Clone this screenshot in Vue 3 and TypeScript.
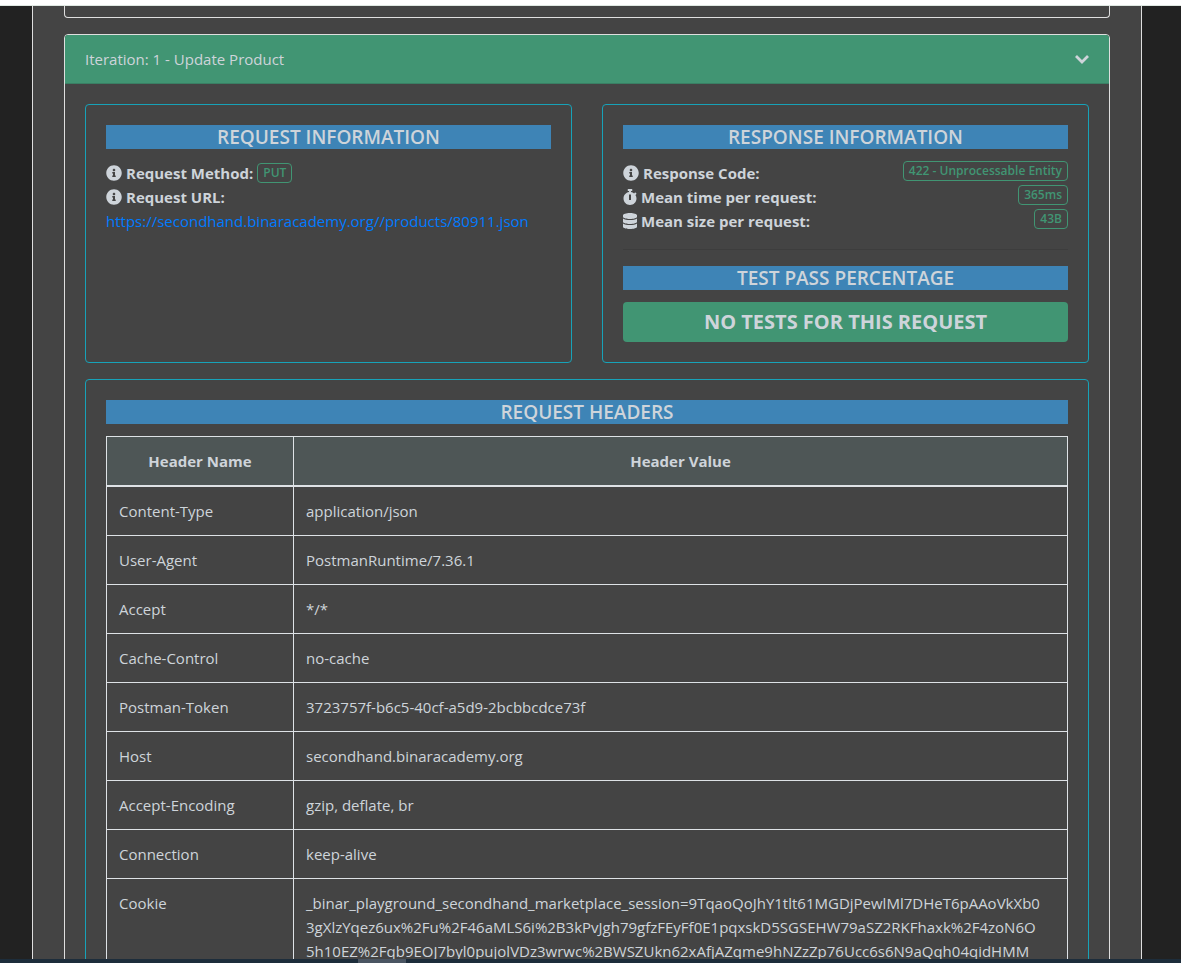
<script setup lang="ts">
interface HeaderRow {
  name: string
  lines: string[]
}

interface Metric {
  icon: 'info' | 'stopwatch' | 'database'
  label: string
  value: string
}

const icons = {
  info: {
    box: '0 0 512 512',
    path: 'M256 8C119.043 8 8 119.083 8 256c0 136.997 111.043 248 248 248s248-111.003 248-248C504 119.083 392.957 8 256 8zm0 110c23.196 0 42 18.804 42 42s-18.804 42-42 42-42-18.804-42-42 18.804-42 42-42zm56 254c0 6.627-5.373 12-12 12h-88c-6.627 0-12-5.373-12-12v-24c0-6.627 5.373-12 12-12h12v-64h-12c-6.627 0-12-5.373-12-12v-24c0-6.627 5.373-12 12-12h64c6.627 0 12 5.373 12 12v100h12c6.627 0 12 5.373 12 12v24z',
  },
  stopwatch: {
    box: '0 0 448 512',
    path: 'M432 304c0 114.9-93.1 208-208 208S16 418.9 16 304c0-104 76.3-190.2 176-205.5V64h-28c-6.6 0-12-5.4-12-12V12c0-6.6 5.4-12 12-12h120c6.6 0 12 5.4 12 12v40c0 6.6-5.4 12-12 12h-28v34.5c37.5 5.8 71.7 21.6 99.7 44.6l27.5-27.5c4.7-4.7 12.3-4.7 17 0l28.3 28.3c4.7 4.7 4.7 12.3 0 17l-29.4 29.4-.6.6C419.7 223.3 432 262.2 432 304zm-176 36V188.5c0-6.6-5.4-12-12-12h-40c-6.6 0-12 5.4-12 12V340c0 6.6 5.4 12 12 12h40c6.6 0 12-5.4 12-12z',
  },
  database: {
    box: '0 0 448 512',
    path: 'M448 73.143v45.714C448 159.143 347.667 192 224 192S0 159.143 0 118.857V73.143C0 32.857 100.333 0 224 0s224 32.857 224 73.143zM448 176v102.857C448 319.143 347.667 352 224 352S0 319.143 0 278.857V176c48.125 33.143 136.208 48.572 224 48.572S399.874 209.143 448 176zm0 160v102.857C448 479.143 347.667 512 224 512S0 479.143 0 438.857V336c48.125 33.143 136.208 48.572 224 48.572S399.874 369.143 448 336z',
  },
}

const metrics: Metric[] = [
  { icon: 'info', label: 'Response Code:', value: '422 - Unprocessable Entity' },
  { icon: 'stopwatch', label: 'Mean time per request:', value: '365ms' },
  { icon: 'database', label: 'Mean size per request:', value: '43B' },
]

const url = 'https://secondhand.binaracademy.org//products/80911.json'

const headers: HeaderRow[] = [
  { name: 'Content-Type', lines: ['application/json'] },
  { name: 'User-Agent', lines: ['PostmanRuntime/7.36.1'] },
  { name: 'Accept', lines: ['*/*'] },
  { name: 'Cache-Control', lines: ['no-cache'] },
  { name: 'Postman-Token', lines: ['3723757f-b6c5-40cf-a5d9-2bcbbcdce73f'] },
  { name: 'Host', lines: ['secondhand.binaracademy.org'] },
  { name: 'Accept-Encoding', lines: ['gzip, deflate, br'] },
  { name: 'Connection', lines: ['keep-alive'] },
  {
    name: 'Cookie',
    lines: [
      '_binar_playground_secondhand_marketplace_session=9TqaoQoJhY1tlt61MGDjPewlMl7DHeT6pAAoVkXb0',
      '3gXlzYqez6ux%2Fu%2F46aMLS6i%2B3kPvJgh79gfzFEyFf0E1pqxskD5SGSEHW79aSZ2RKFhaxk%2F4zoN6O',
      '5h10EZ%2Fqb9EOJ7byl0pujolVDz3wrwc%2BWSZUkn62xAfjAZqme9hNZzZp76Ucc6s6N9aQqh04qidHMM',
    ],
  },
]
</script>

<template>
  <div class="window">
    <div class="chrome"></div>
    <main class="page">
      <div class="container">
        <div class="previous"></div>
        <section class="iteration">
          <button class="toggle" type="button" aria-expanded="true">
            <span>Iteration: 1 - Update Product</span>
            <svg class="chevron" viewBox="0 0 14 10" aria-hidden="true">
              <path d="M1 2 7 8 13 2" fill="none" stroke="currentColor" stroke-width="2.8" />
            </svg>
          </button>
          <div class="content">
            <div class="cards">
              <section class="card">
                <h5>REQUEST INFORMATION</h5>
                <div class="line">
                  <svg class="icon" :viewBox="icons.info.box" aria-hidden="true"><path :d="icons.info.path" /></svg>
                  <strong>Request Method:</strong>
                  <span class="badge">PUT</span>
                </div>
                <div class="line">
                  <svg class="icon" :viewBox="icons.info.box" aria-hidden="true"><path :d="icons.info.path" /></svg>
                  <strong>Request URL:</strong>
                </div>
                <a class="url" :href="url">{{ url }}</a>
              </section>
              <section class="card">
                <h5>RESPONSE INFORMATION</h5>
                <div v-for="m in metrics" :key="m.label" class="line">
                  <svg class="icon" :class="{ narrow: m.icon !== 'info' }" :viewBox="icons[m.icon].box" aria-hidden="true">
                    <path :d="icons[m.icon].path" />
                  </svg>
                  <strong>{{ m.label }}</strong>
                  <span class="badge value">{{ m.value }}</span>
                </div>
                <hr />
                <h5>TEST PASS PERCENTAGE</h5>
                <div class="result">NO TESTS FOR THIS REQUEST</div>
              </section>
            </div>
            <section class="card">
              <h5>REQUEST HEADERS</h5>
              <table>
                <thead>
                  <tr>
                    <th class="name" scope="col">Header Name</th>
                    <th scope="col">Header Value</th>
                  </tr>
                </thead>
                <tbody>
                  <tr v-for="row in headers" :key="row.name">
                    <td>{{ row.name }}</td>
                    <td><span v-for="line in row.lines" :key="line" class="text-line">{{ line }}</span></td>
                  </tr>
                </tbody>
              </table>
            </section>
          </div>
        </section>
      </div>
    </main>
    <footer class="taskbar"><span class="task"></span></footer>
  </div>
</template>

<style>
body {
  margin: 0;
  background: #222;
}
</style>

<style scoped>
* {
  box-sizing: border-box;
}
.window {
  height: 100vh;
  display: flex;
  flex-direction: column;
  overflow: hidden;
  font: 15px/24px "Segoe UI", "Open Sans", "Noto Sans", sans-serif;
  color: #ced4da;
}
.chrome {
  flex: none;
  height: 6px;
  background: #fff;
  border-bottom: 1px solid #dfe8e2;
}
.page {
  flex: 1;
  min-height: 0;
  overflow: hidden;
  background: #222;
  padding: 0 39px 0 32px;
}
.container {
  background: #444;
  border: solid #dfdfdf;
  border-width: 0 1px;
  padding: 0 31px;
}
.previous {
  height: 12px;
  border: 1px solid #dfdfdf;
  border-top: 0;
  border-radius: 0 0 4px 4px;
  margin-bottom: 16px;
}
.iteration {
  border: 1px solid #dfdfdf;
  border-radius: 4px;
  overflow: hidden;
}
.toggle {
  display: flex;
  align-items: center;
  justify-content: space-between;
  width: 100%;
  padding: 12px 20px;
  border: 0;
  border-bottom: 1px solid #3a7f64;
  background: #419573;
  color: inherit;
  font: inherit;
  text-align: left;
}
.chevron {
  width: 14px;
  height: 10px;
}
.content {
  padding: 20px;
}
.cards {
  display: grid;
  grid-template-columns: 1fr 1fr;
  gap: 30px;
  margin-bottom: 16px;
}
.card {
  min-width: 0;
  border: 1px solid #17a2b8;
  border-radius: 4px;
  padding: 20px;
}
h5 {
  margin: 0 0 12px;
  background: #3e84b6;
  font-size: 19px;
  line-height: 24px;
  font-weight: 600;
  text-align: center;
}
.line {
  display: flex;
  align-items: center;
  height: 24px;
  gap: 4px;
}
.icon {
  flex: none;
  width: 16px;
  height: 16px;
  fill: currentColor;
}
.narrow {
  width: 14px;
}
.badge {
  height: 20px;
  padding: 0 5px;
  border: 1px solid #419573;
  border-radius: 4px;
  color: #419573;
  font-size: 12px;
  line-height: 18px;
  font-weight: 600;
}
.value {
  align-self: flex-start;
  margin-left: auto;
}
.url {
  color: #007bff;
  text-decoration: none;
}
hr {
  margin: 16px 0;
  border: 0;
  border-top: 1px solid #3d3d3d;
}
.result {
  height: 40px;
  border-radius: 4px;
  background: #419573;
  font-size: 20px;
  line-height: 40px;
  font-weight: 700;
  text-align: center;
}
table {
  width: 100%;
  table-layout: fixed;
  border-collapse: collapse;
}
th,
td {
  border: 1px solid #dee2e6;
  padding: 12px;
  vertical-align: top;
}
th {
  background: #4e5656;
  border-bottom-width: 2px;
  font-weight: 700;
}
td {
  background: #444;
}
.name {
  width: 187px;
}
.text-line {
  display: block;
  white-space: nowrap;
}
.taskbar {
  flex: none;
  height: 4px;
  background: #1d2d3b;
  padding-left: 358px;
}
.task {
  display: block;
  width: 48px;
  height: 4px;
  background: #4a5562;
}
</style>
